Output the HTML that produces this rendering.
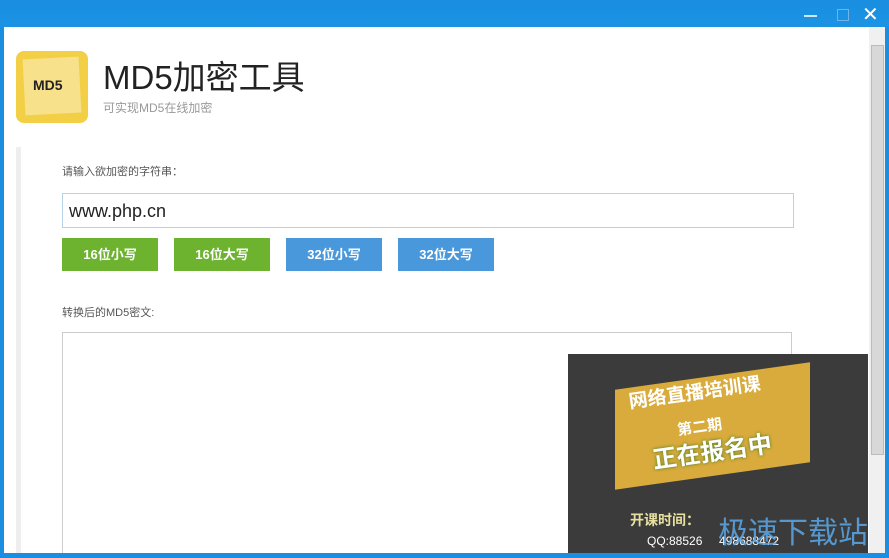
<!DOCTYPE html><html><head><meta charset="utf-8"><style>
*{margin:0;padding:0;box-sizing:border-box}
html,body{width:889px;height:558px;overflow:hidden}
body{background:#1a8ee0;font-family:"Liberation Sans","Noto Sans CJK SC",sans-serif;position:relative}
.a{position:absolute}
.btn{position:absolute;top:238px;width:96px;height:33px;color:#fff;font-weight:bold;font-size:13px;text-align:center;line-height:33px}
</style></head><body>
<div class="a" style="left:0;top:0;width:889px;height:27px;background:linear-gradient(#1a8ee0,#1b93e3)"></div>
<div class="a" style="left:804px;top:15px;width:13px;height:2px;background:#cfe6f8"></div>
<div class="a" style="left:837px;top:9px;width:12px;height:12px;border:1px solid #6fb3e8"></div>
<div class="a" style="left:862px;top:2px;color:#fff;font-size:20px">✕</div>
<div class="a" style="left:4px;top:27px;width:881px;height:526px;background:#fff;overflow:hidden">
<div class="a" style="left:58px;top:305px;width:730px;height:240px;border:1px solid #ccc"></div>
</div>
<div class="a" style="left:16px;top:51px;width:72px;height:72px;background:#f2cf45;border-radius:8px"></div>
<div class="a" style="left:24px;top:58px;width:56px;height:56px;background:#f7e18a;transform:rotate(-3deg)"></div>
<div class="a" style="left:33px;top:77px;font-weight:bold;font-size:14px;color:#222">MD5</div>
<div class="a" style="left:103px;top:51px;font-size:33px;color:#222">MD5加密工具</div>
<div class="a" style="left:103px;top:99px;font-size:12px;color:#999">可实现MD5在线加密</div>
<div class="a" style="left:16px;top:147px;width:5px;height:406px;background:#eee"></div>
<div class="a" style="left:62px;top:163px;font-size:11px;color:#555">请输入欲加密的字符串：</div>
<div class="a" style="left:62px;top:193px;width:732px;height:35px;border:1px solid #b6d2e6;font-size:18px;color:#222;padding:7px 6px">www.php.cn</div>
<div class="btn" style="left:62px;background:#6db32f">16位小写</div>
<div class="btn" style="left:174px;background:#6db32f">16位大写</div>
<div class="btn" style="left:286px;background:#4a98dc">32位小写</div>
<div class="btn" style="left:398px;background:#4a98dc">32位大写</div>
<div class="a" style="left:62px;top:304px;font-size:11px;color:#555">转换后的MD5密文:</div>
<div class="a" style="left:869px;top:27px;width:16px;height:526px;background:#f0f0f0"></div>
<div class="a" style="left:871px;top:45px;width:13px;height:410px;background:#d8d8d8;border:1px solid #bbb"></div>
<div class="a" style="left:568px;top:354px;width:300px;height:199px;background:#3a3b3a"></div>
<div class="a" style="left:615px;top:376px;width:195px;height:100px;background:#d8ab3c;transform:skewY(-8deg)"></div>
<div class="a" style="left:628px;top:378px;font-size:19px;font-weight:bold;color:#fff;transform:rotate(-8deg)">网络直播培训课</div>
<div class="a" style="left:677px;top:416px;font-size:15px;font-weight:bold;color:#fff;transform:rotate(-8deg)">第二期</div>
<div class="a" style="left:652px;top:432px;font-size:24px;font-weight:bold;color:#fff;transform:rotate(-8deg);text-shadow:0 0 3px #3a7a20">正在报名中</div>
<div class="a" style="left:630px;top:510px;font-size:14px;font-weight:bold;color:#e8e0a0">开课时间：</div>
<div class="a" style="left:647px;top:534px;font-size:12px;color:#fff">QQ:88526 &nbsp;&nbsp;&nbsp; 498688472</div>
<div class="a" style="left:718px;top:508px;font-size:30px;color:#5aa8e8;opacity:.85">极速下载站</div>
<div class="a" style="left:0;top:553px;width:889px;height:5px;background:#1a8ee0"></div>
</body></html>
